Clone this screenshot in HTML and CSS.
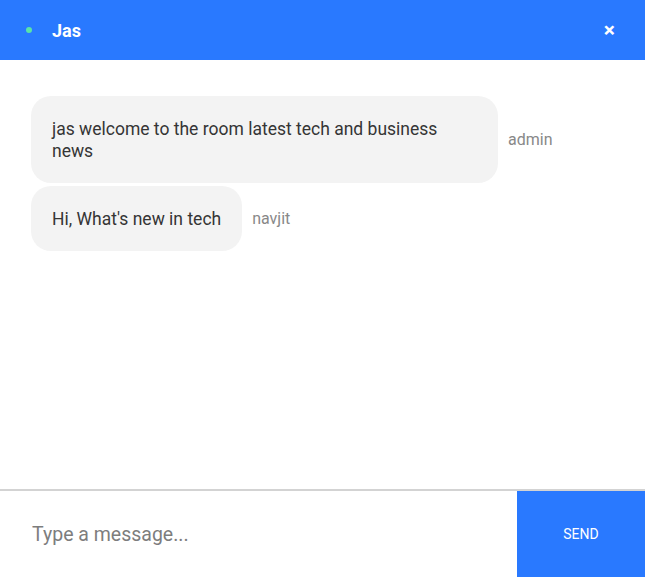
FILE: index.html
```html
<!DOCTYPE html>
<html>
<head>
<meta charset="utf-8">
<link rel="stylesheet" href="styles.css">
</head>
<body>
<div class="chat">
  <header class="header">
    <div class="title">
      <span class="dot"></span>
      <span class="name">Jas</span>
    </div>
    <span class="close">×</span>
  </header>
  <main class="messages">
    <div class="row">
      <div class="bubble">jas welcome to the room latest tech and business news</div>
      <span class="meta">admin</span>
    </div>
    <div class="row">
      <div class="bubble">Hi, What's new in tech</div>
      <span class="meta">navjit</span>
    </div>
  </main>
  <footer class="composer">
    <input class="input" type="text" placeholder="Type a message...">
    <button class="send">SEND</button>
  </footer>
</div>
</body>
</html>
```
FILE: styles.css
```css
* { box-sizing: border-box; }
html, body { margin: 0; padding: 0; height: 100%; }
body { font-family: Roboto, "Liberation Sans", sans-serif; background: #fff; }
.chat { display: flex; flex-direction: column; height: 577px; width: 645px; }
.header {
  height: 60px; background: #2979ff; color: #fff;
  display: flex; align-items: center; justify-content: space-between;
  padding: 0 30px 0 26px; flex-shrink: 0;
}
.title { display: flex; align-items: center; gap: 20px; }
.dot { width: 6px; height: 6px; border-radius: 50%; background: #5ae4a8; }
.name { font-weight: 700; font-size: 18px; }
.close { font-size: 21px; font-weight: 700; line-height: 1; }
.messages {
  flex: 1; padding: 36px 31px 0; display: flex; flex-direction: column; gap: 3px;
}
.row { display: flex; align-items: center; gap: 10px; }
.bubble {
  background: #f3f3f3; border-radius: 20px; padding: 22px 21px 21px;
  font-size: 17.5px; line-height: 22px; color: #353535; max-width: 467px;
}
.meta { font-size: 16px; color: #888; }
.composer {
  height: 88px; border-top: 2px solid #d3d3d3; display: flex; flex-shrink: 0;
}
.input {
  flex: 1; border: none; outline: none; padding: 0 32px;
  font-family: Roboto, "Liberation Sans", sans-serif; font-size: 19.5px; color: #333;
}
.input::placeholder { color: #7d7d7d; }
.send {
  width: 128px; border: none; background: #2979ff; color: #fff;
  font-family: Roboto, "Liberation Sans", sans-serif; font-size: 14px;
}
```
